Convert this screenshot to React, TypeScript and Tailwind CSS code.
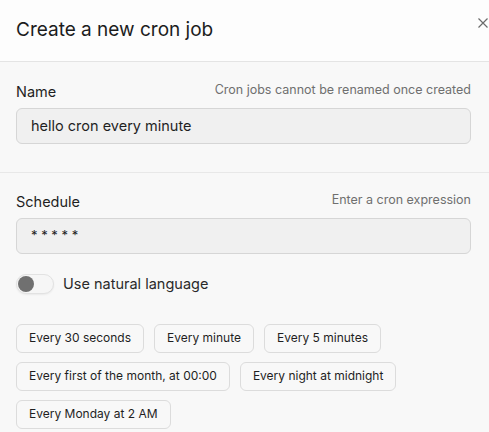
import React from "react";

const presets = [
  ["Every 30 seconds", "Every minute", "Every 5 minutes"],
  ["Every first of the month, at 00:00", "Every night at midnight"],
  ["Every Monday at 2 AM"],
];

function Field({
  label,
  hint,
  value,
  mono,
}: {
  label: string;
  hint: string;
  value: string;
  mono?: boolean;
}) {
  return (
    <div className="flex flex-col">
      <div className="flex items-end justify-between">
        <span className="text-[14.5px] leading-5 text-[#1f1f1f]">{label}</span>
        <span className="mb-[4px] text-[12.5px] leading-4 text-[#6f6f6f]">{hint}</span>
      </div>
      <div className="mt-[6px] flex h-9 items-center rounded-md border border-[#d6d6d6] bg-[#f0f0f0] px-[14px]">
        <span
          className={
            mono
              ? "text-[13px] text-[#1f1f1f]"
              : "text-[14.5px] text-[#1f1f1f]"
          }
        >
          {value}
        </span>
      </div>
    </div>
  );
}

export default function App() {
  return (
    <div
      className="h-[432px] w-[489px] overflow-hidden bg-[#f8f8f8]"
      style={{ fontFamily: "Inter, 'Noto Sans', sans-serif" }}
    >
      <div className="relative flex h-[62px] items-center border-b border-[#e4e4e4] bg-[#fdfdfd] px-4">
        <h1 className="text-[19px] font-normal text-[#1c1c1c]">Create a new cron job</h1>
        <button className="absolute right-[1px] top-[18px] text-[#6b6b6b]">
          <svg width="10" height="10" viewBox="0 0 10 10" fill="none">
            <path d="M0.5 0.5L9.5 9.5M9.5 0.5L0.5 9.5" stroke="currentColor" strokeWidth="1.2" />
          </svg>
        </button>
      </div>

      <div className="border-b border-[#e8e8e8] pl-4 pr-[18px] pb-[28px] pt-[20px]">
        <Field label="Name" hint="Cron jobs cannot be renamed once created" value="hello cron every minute" />
      </div>

      <div className="pl-4 pr-[18px] pt-[19px]">
        <Field label="Schedule" hint="Enter a cron expression" value="* * * * *" mono />

        <div className="mt-[19px] flex items-center gap-[9px]">
          <div className="flex h-5 w-[38px] items-center rounded-full border border-[#e2e2e2] bg-[#f6f6f6] pl-[1px] shadow-[0_1px_2px_rgba(0,0,0,0.06)]">
            <div className="h-4 w-4 rounded-full bg-[#707070]" />
          </div>
          <span className="text-[14.5px] text-[#2a2a2a]">Use natural language</span>
        </div>

        <div className="mt-[29px] flex flex-col gap-[9px]">
          {presets.map((row, i) => (
            <div key={i} className="flex gap-[10px]">
              {row.map((p) => (
                <button
                  key={p}
                  className="flex h-[29px] items-center rounded-md border border-[#dcdcdc] bg-[#f8f8f8] px-3 text-[12px] text-[#1f1f1f]"
                >
                  {p}
                </button>
              ))}
            </div>
          ))}
        </div>
      </div>
    </div>
  );
}
